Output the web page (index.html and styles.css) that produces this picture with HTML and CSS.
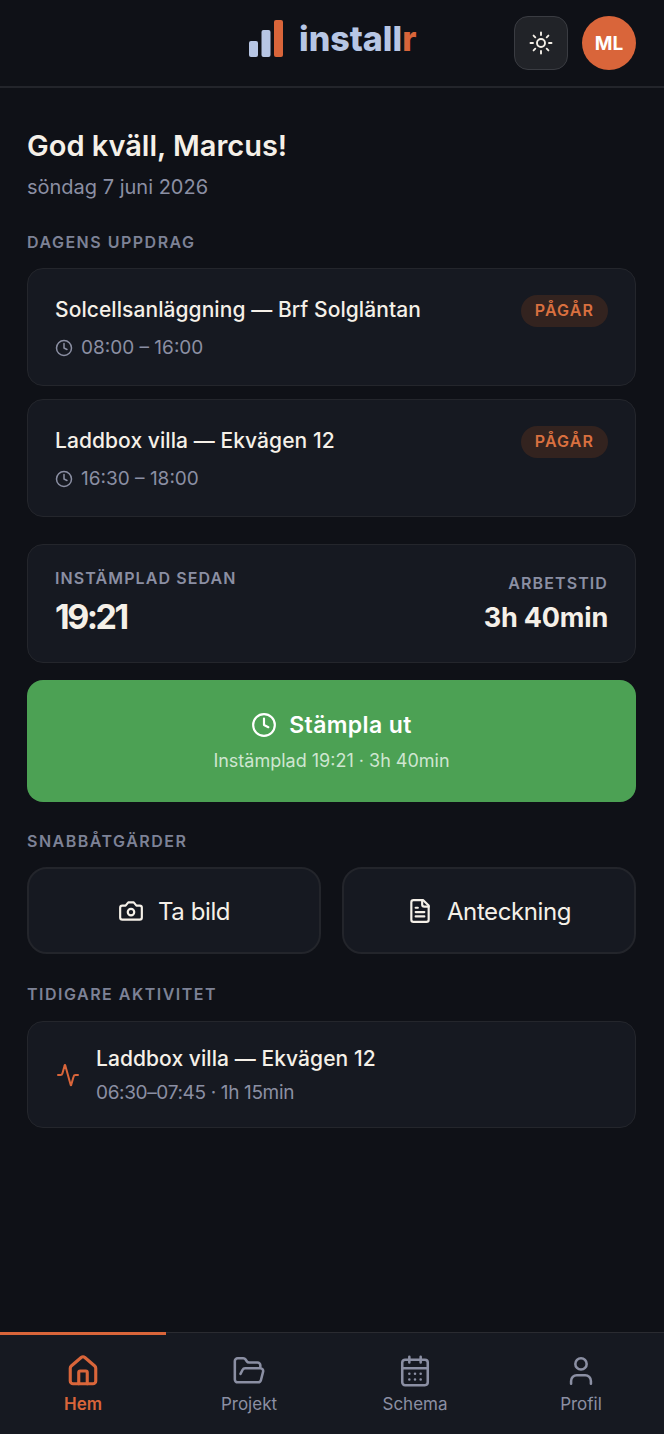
FILE: index.html
```html
<!DOCTYPE html>
<html lang="sv">
<head>
    <meta charset="UTF-8">
    <meta name="viewport" content="width=device-width, initial-scale=1.0">
    <title>installr</title>
    <link rel="stylesheet" href="styles.css">
</head>
<body>
    <div class="app">
        <header class="topbar">
            <div class="logo">
                <svg class="logo-mark" width="36" height="37" viewBox="0 0 36 37">
                    <rect x="0" y="21" width="9" height="16" rx="2" fill="#b7c6e4"/>
                    <rect x="12.500" y="10" width="9" height="27" rx="2" fill="#b7c6e4"/>
                    <rect x="25" y="0" width="9" height="37" rx="2" fill="#d9653a"/>
                </svg>
                <span class="logo-text">install<span class="logo-accent">r</span></span>
            </div>
            <button class="theme-btn">
                <svg width="24" height="24" viewBox="0 0 24 24" fill="none" stroke="#f5f0e8" stroke-width="1.900" stroke-linecap="round">
                    <circle cx="12" cy="12" r="4"/>
                    <path d="M12 1.500v2.500M12 20v2.500M1.500 12H4M20 12h2.500M4.600 4.600l1.700 1.700M17.700 17.700l1.700 1.700M4.600 19.400l1.700-1.700M17.700 6.300l1.700-1.700"/>
                </svg>
            </button>
            <div class="avatar">ML</div>
        </header>

        <main class="content">
            <h1 class="greeting">God kväll, Marcus!</h1>
            <p class="date">söndag 7 juni 2026</p>

            <h2 class="section-label first">DAGENS UPPDRAG</h2>
            <div class="jobs">
                <div class="card job">
                    <div class="job-info">
                        <div class="job-title">Solcellsanläggning — Brf Solgläntan</div>
                        <div class="job-time">
                            <svg width="18" height="18" viewBox="0 0 24 24" fill="none" stroke="currentColor" stroke-width="2" stroke-linecap="round" stroke-linejoin="round"><circle cx="12" cy="12" r="10"/><path d="M12 6v6l4 2"/></svg>
                            08:00 – 16:00
                        </div>
                    </div>
                    <span class="badge">PÅGÅR</span>
                </div>
                <div class="card job">
                    <div class="job-info">
                        <div class="job-title">Laddbox villa — Ekvägen 12</div>
                        <div class="job-time">
                            <svg width="18" height="18" viewBox="0 0 24 24" fill="none" stroke="currentColor" stroke-width="2" stroke-linecap="round" stroke-linejoin="round"><circle cx="12" cy="12" r="10"/><path d="M12 6v6l4 2"/></svg>
                            16:30 – 18:00
                        </div>
                    </div>
                    <span class="badge">PÅGÅR</span>
                </div>
            </div>

            <div class="card status">
                <div>
                    <div class="status-label">INSTÄMPLAD SEDAN</div>
                    <div class="status-time">19:21</div>
                </div>
                <div class="status-right">
                    <div class="status-label">ARBETSTID</div>
                    <div class="status-hours">3h 40min</div>
                </div>
            </div>

            <button class="stamp-btn">
                <span class="stamp-main">
                    <svg width="26" height="26" viewBox="0 0 24 24" fill="none" stroke="currentColor" stroke-width="2" stroke-linecap="round" stroke-linejoin="round"><circle cx="12" cy="12" r="10"/><path d="M12 6v6l4 2"/></svg>
                    Stämpla ut
                </span>
                <span class="stamp-sub">Instämplad 19:21 · 3h 40min</span>
            </button>

            <h2 class="section-label quick-label">SNABBÅTGÄRDER</h2>
            <div class="quick">
                <button class="card quick-btn">
                    <svg width="26" height="26" viewBox="0 0 24 24" fill="none" stroke="currentColor" stroke-width="2" stroke-linecap="round" stroke-linejoin="round"><path d="M14.500 4h-5L7 7H4a2 2 0 0 0-2 2v9a2 2 0 0 0 2 2h16a2 2 0 0 0 2-2V9a2 2 0 0 0-2-2h-3l-2.500-3z"/><circle cx="12" cy="13" r="3"/></svg>
                    Ta bild
                </button>
                <button class="card quick-btn">
                    <svg width="26" height="26" viewBox="0 0 24 24" fill="none" stroke="currentColor" stroke-width="2" stroke-linecap="round" stroke-linejoin="round"><path d="M15 2H6a2 2 0 0 0-2 2v16a2 2 0 0 0 2 2h12a2 2 0 0 0 2-2V7z"/><path d="M14 2v4a2 2 0 0 0 2 2h4"/><path d="M10 9H8M16 13H8M16 17H8"/></svg>
                    Anteckning
                </button>
            </div>

            <h2 class="section-label activity-label">TIDIGARE AKTIVITET</h2>
            <div class="card activity">
                <svg class="activity-icon" width="24" height="24" viewBox="0 0 24 24" fill="none" stroke="#d9653a" stroke-width="2" stroke-linecap="round" stroke-linejoin="round"><path d="M22 12h-2.500a2 2 0 0 0-1.900 1.500l-2.400 8.500a.25.25 0 0 1-.5 0L9.200 2.200a.25.25 0 0 0-.5 0L6.400 10.500A2 2 0 0 1 4.500 12H2"/></svg>
                <div>
                    <div class="job-title">Laddbox villa — Ekvägen 12</div>
                    <div class="activity-meta">06:30–07:45 · 1h 15min</div>
                </div>
            </div>
        </main>

        <nav class="tabbar">
            <a class="tab active">
                <svg width="34" height="34" viewBox="0 0 24 24" fill="none" stroke="currentColor" stroke-width="2.200" stroke-linecap="round" stroke-linejoin="round"><path d="M15 21v-8a1 1 0 0 0-1-1h-4a1 1 0 0 0-1 1v8"/><path d="M3 10a2 2 0 0 1 .7-1.500l7-6a2 2 0 0 1 2.600 0l7 6a2 2 0 0 1 .7 1.500v9a2 2 0 0 1-2 2H5a2 2 0 0 1-2-2z"/></svg>
                Hem
            </a>
            <a class="tab">
                <svg width="34" height="34" viewBox="0 0 24 24" fill="none" stroke="currentColor" stroke-width="1.800" stroke-linecap="round" stroke-linejoin="round"><path d="m6 14 1.500-2.900A2 2 0 0 1 9.240 10H20a2 2 0 0 1 1.940 2.500l-1.540 6a2 2 0 0 1-1.950 1.500H4a2 2 0 0 1-2-2V5a2 2 0 0 1 2-2h3.900a2 2 0 0 1 1.690.9l.81 1.200a2 2 0 0 0 1.670.9H18a2 2 0 0 1 2 2v2"/></svg>
                Projekt
            </a>
            <a class="tab">
                <svg width="34" height="34" viewBox="0 0 24 24" fill="none" stroke="currentColor" stroke-width="1.800" stroke-linecap="round" stroke-linejoin="round"><path d="M8 2v4M16 2v4"/><rect x="3" y="4" width="18" height="18" rx="2"/><path d="M3 10h18M8 14h.01M12 14h.01M16 14h.01M8 18h.01M12 18h.01M16 18h.01"/></svg>
                Schema
            </a>
            <a class="tab">
                <svg width="34" height="34" viewBox="0 0 24 24" fill="none" stroke="currentColor" stroke-width="1.800" stroke-linecap="round" stroke-linejoin="round"><path d="M19 21v-2a4 4 0 0 0-4-4H9a4 4 0 0 0-4 4v2"/><circle cx="12" cy="7" r="4"/></svg>
                Profil
            </a>
        </nav>
    </div>
</body>
</html>
```
FILE: styles.css
```css
* {
    box-sizing: border-box;
}

body {
    margin: 0;
    background-color: #0f1117;
    color: #f5f0e8;
    font-family: Inter, "Liberation Sans", sans-serif;
}

button {
    font-family: inherit;
    cursor: pointer;
}

.app {
    display: flex;
    flex-direction: column;
    height: 1434px;
}

.topbar {
    height: 88px;
    padding: 16px 28px 0;
    display: flex;
    align-items: flex-start;
    border-bottom: 2px solid #23252b;
    position: relative;
    flex-shrink: 0;
}

.logo {
    position: absolute;
    left: 249px;
    top: 20px;
    display: flex;
    align-items: center;
    gap: 14px;
}

.logo-text {
    font-size: 34px;
    font-weight: 800;
    letter-spacing: 0;
    color: #b7c6e4;
    line-height: 37px;
}

.logo-accent {
    color: #d9653a;
}

.theme-btn {
    margin-left: auto;
    width: 54px;
    height: 54px;
    border: 1px solid #3a3c42;
    border-radius: 14px;
    background-color: #212328;
    display: flex;
    align-items: center;
    justify-content: center;
    padding: 0;
}

.avatar {
    margin-left: 14px;
    width: 54px;
    height: 54px;
    border-radius: 50%;
    background-color: #d9653a;
    color: #fff;
    font-weight: 700;
    font-size: 19px;
    display: flex;
    align-items: center;
    justify-content: center;
}

.content {
    flex: 1;
    padding: 40px 28px 0 27px;
}

.greeting {
    margin: 0;
    font-size: 29px;
    font-weight: 600;
    line-height: 36px;
}

.date {
    margin: 9px 0 0;
    font-size: 20px;
    line-height: 28px;
    color: #8b8fa3;
}

.section-label {
    margin: 0;
    font-size: 16px;
    font-weight: 600;
    line-height: 20px;
    letter-spacing: 1.5px;
    color: #7d8296;
}

.section-label.first {
    margin-top: 31px;
}

.card {
    background-color: #161921;
    border: 1px solid #24262c;
    border-radius: 16px;
}

.jobs {
    margin-top: 16px;
    display: flex;
    flex-direction: column;
    gap: 13px;
}

.job {
    height: 118px;
    padding: 26px 27px 0;
    display: flex;
    align-items: flex-start;
    justify-content: space-between;
}

.job-title {
    font-size: 21px;
    font-weight: 500;
    line-height: 30px;
    letter-spacing: 0.07px;
}

.job-time {
    margin-top: 10px;
    display: flex;
    align-items: center;
    gap: 8px;
    font-size: 19px;
    line-height: 26px;
    color: #8b8fa3;
}

.badge {
    padding: 0 14px;
    height: 32px;
    line-height: 30px;
    border-radius: 16px;
    background-color: #33231f;
    color: #d9703f;
    font-size: 16px;
    font-weight: 600;
    letter-spacing: 1.1px;
}

.status {
    margin-top: 27px;
    height: 119px;
    padding: 22px 27px 0;
    display: flex;
    justify-content: space-between;
}

.status-right {
    text-align: right;
    padding-top: 5px;
}

.status-label {
    font-size: 16px;
    font-weight: 600;
    line-height: 22px;
    letter-spacing: 1.1px;
    color: #8b8fa3;
}

.status-time {
    margin-top: 7px;
    font-size: 34px;
    font-weight: 700;
    line-height: 42px;
    letter-spacing: -2.5px;
}

.status-hours {
    margin-top: 6px;
    font-size: 27px;
    font-weight: 700;
    line-height: 36px;
    letter-spacing: -0.2px;
}

.stamp-btn {
    margin-top: 17px;
    width: 100%;
    height: 122px;
    border: 0;
    border-radius: 16px;
    background-color: #4ca154;
    color: #fff;
    display: flex;
    flex-direction: column;
    align-items: center;
    justify-content: center;
    gap: 7px;
    padding: 1px 0 0;
}

.stamp-main {
    display: flex;
    align-items: center;
    gap: 12px;
    font-size: 23px;
    font-weight: 600;
    line-height: 32px;
    letter-spacing: 0.4px;
}

.stamp-sub {
    font-size: 18px;
    line-height: 26px;
    color: #cfe6d1;
}

.quick-label {
    margin-top: 29px;
}

.quick {
    margin-top: 16px;
    display: grid;
    grid-template-columns: 1fr 1fr;
    gap: 21px;
}

.quick-btn {
    height: 87px;
    border: 2px solid #23252b;
    border-radius: 20px;
    color: #f5f0e8;
    font-size: 24px;
    font-weight: 400;
    letter-spacing: -0.4px;
    display: flex;
    align-items: center;
    justify-content: center;
    gap: 14px;
    padding: 1px 0 0;
}

.activity-label {
    margin-top: 30px;
}

.activity {
    margin-top: 17px;
    height: 107px;
    padding: 0 28px;
    display: flex;
    align-items: center;
    gap: 16px;
}

.activity-meta {
    margin-top: 6px;
    font-size: 19px;
    line-height: 26px;
    color: #8b8fa3;
    letter-spacing: -0.35px;
}

.tabbar {
    height: 102px;
    flex-shrink: 0;
    display: grid;
    grid-template-columns: repeat(4, 1fr);
    background-color: #161921;
    border-top: 1px solid #2a2b31;
}

.tab {
    padding-top: 21px;
    display: flex;
    flex-direction: column;
    align-items: center;
    gap: 5px;
    font-size: 17px;
    line-height: 22px;
    color: #8b8fa3;
    position: relative;
}

.tab.active {
    color: #d9653a;
    font-weight: 600;
}

.tab.active::before {
    content: "";
    position: absolute;
    left: 0;
    right: 0;
    top: -1px;
    height: 3px;
    background-color: #d9653a;
}
```
